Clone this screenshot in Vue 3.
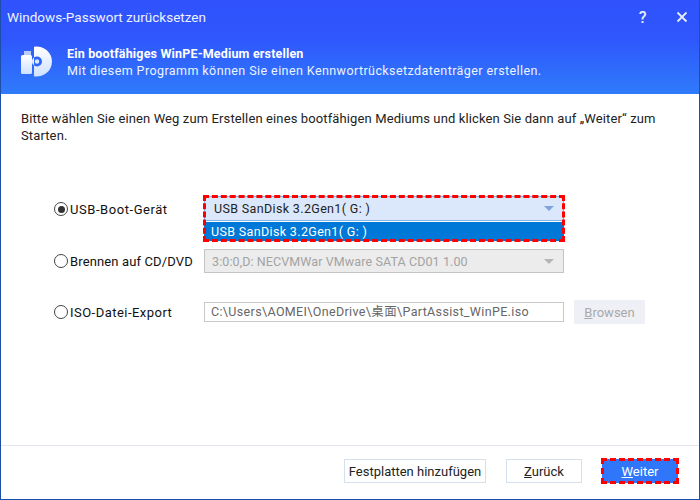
<script setup>
const rows = [
  { label: 'USB-Boot-Gerät', checked: true, spacing: '0.56px' },
  { label: 'Brennen auf CD/DVD', checked: false, spacing: '0.13px' },
  { label: 'ISO-Datei-Export', checked: false, spacing: '0.47px' }
]
</script>

<template>
  <div class="win">
    <header class="head">
      <div class="titlebar">
        <span class="title">Windows-Passwort zurücksetzen</span>
        <div class="ctrls">
          <span class="ctrl">?</span>
          <svg class="close" width="12" height="12" viewBox="0 0 12 12"><path d="M1.5 1.5L10.5 10.5M10.5 1.5L1.5 10.5" stroke="#e6edff" stroke-width="1.8" fill="none"/></svg>
        </div>
      </div>
      <div class="banner">
        <svg class="logo" width="34" height="32" viewBox="0 0 34 32">
          <defs>
            <linearGradient id="lg" x1="0" y1="0" x2="0" y2="1"><stop offset="0" stop-color="#ffffff"/><stop offset="1" stop-color="#cfe0ff"/></linearGradient>
          </defs>
          <path d="M14 .8A15 15 0 1 1 14 30.2Z M12 15.5a5 5 0 1 0 10 0a5 5 0 1 0-10 0Z" fill="url(#lg)" fill-rule="evenodd"/>
          <circle cx="17" cy="15.5" r="2.2" fill="#dce8ff"/>
          <path d="M4 5h7v4H4z" fill="#b9cdfb"/>
          <rect x="1" y="9" width="11" height="19" rx="1.5" fill="url(#lg)"/>
        </svg>
        <div class="banner-text">
          <div class="b1">Ein bootfähiges WinPE-Medium erstellen</div>
          <div class="b2">Mit diesem Programm können Sie einen Kennwortrücksetzdatenträger erstellen.</div>
        </div>
      </div>
    </header>

    <main class="body">
      <p class="intro">Bitte wählen Sie einen Weg zum Erstellen eines bootfähigen Mediums und klicken Sie dann auf „Weiter“ zum Starten.</p>

      <div class="form">
        <div class="row row-usb">
          <label class="opt" :style="{ letterSpacing: rows[0].spacing }">
            <span class="radio on"><i></i></span>{{ rows[0].label }}
          </label>
          <div class="dropwrap">
            <div class="combo active">
              <span>USB SanDisk 3.2Gen1( G: )</span>
              <span class="arrow blue"></span>
            </div>
            <div class="item">USB SanDisk 3.2Gen1( G: )</div>
            <div class="dash"></div>
          </div>
        </div>

        <div class="row row-cd">
          <label class="opt" :style="{ letterSpacing: rows[1].spacing }">
            <span class="radio"></span>{{ rows[1].label }}
          </label>
          <div class="combo disabled">
            <span>3:0:0,D: NECVMWar VMware SATA CD01 1.00</span>
            <span class="arrow"></span>
          </div>
        </div>

        <div class="row row-iso">
          <label class="opt" :style="{ letterSpacing: rows[2].spacing }">
            <span class="radio"></span>{{ rows[2].label }}
          </label>
          <div class="input">C:\Users\AOMEI\OneDrive\桌面\PartAssist_WinPE.iso</div>
          <button class="browse"><u>B</u>rowsen</button>
        </div>
      </div>
    </main>

    <footer class="foot">
      <button class="btn wide">Festplatten hinzufügen</button>
      <button class="btn back"><u>Z</u>urück</button>
      <button class="btn next"><u>W</u>eiter<span class="dash"></span></button>
    </footer>
  </div>
</template>

<style>
html, body { margin: 0; padding: 0; background: #fff; }
</style>

<style scoped>
.win {
  width: 700px;
  height: 500px;
  box-sizing: border-box;
  border: 1px solid #1d4fa8;
  border-top: 0;
  background: #fff;
  display: flex;
  flex-direction: column;
  font-family: "Roboto", "Noto Sans CJK SC", sans-serif;
  font-size: 13px;
  letter-spacing: 0.35px;
  color: #222;
}
.head {
  height: 94px;
  background: linear-gradient(180deg, #2f52fd 0%, #2f56fc 40%, #2f7bfb 100%);
  color: #fff;
  flex: none;
}
.titlebar {
  height: 34px;
  display: flex;
  align-items: center;
  justify-content: space-between;
  padding: 0 0 0 6px;
}
.title { font-size: 13.5px; letter-spacing: 0; color: #eef2ff; }
.ctrls { display: flex; align-items: center; gap: 29px; padding-right: 10px; }
.ctrl { font-size: 16px; font-weight: 500; color: #e6edff; }
.close { display: block; margin-right: 1px; }
.banner {
  display: flex;
  align-items: center;
  gap: 13px;
  padding: 8px 0 0 19px;
  height: 40px;
}
.logo { flex: none; }
.banner-text { line-height: 17px; }
.b1 { font-weight: 700; font-size: 12.5px; letter-spacing: 0.17px; }
.b2 { font-size: 12.5px; letter-spacing: 0.42px; color: #eef3ff; }
.body { flex: 1; padding: 0 20px; }
.intro {
  margin: 16px 0 0;
  line-height: 17px;
  width: 650px;
  letter-spacing: 0.12px;
  color: #222;
}
.form { margin-top: 52px; }
.row { display: flex; align-items: center; padding-left: 33px; }
.row-usb { align-items: flex-start; height: 45px; }
.row-cd { margin-top: 8px; height: 24px; }
.row-iso { margin-top: 27px; height: 24px; }
.opt { display: flex; align-items: center; width: 150px; flex: none; height: 24px; color: #111; }
.row-usb .opt { margin-top: 1px; }
.radio {
  width: 12px;
  height: 12px;
  border: 1px solid #444;
  border-radius: 50%;
  background: #fff;
  margin-right: 2px;
  display: flex;
  align-items: center;
  justify-content: center;
  flex: none;
}
.radio i { width: 7px; height: 7px; border-radius: 50%; background: #333; }
.dropwrap { position: relative; width: 360px; height: 45px; border: 0; }
.combo {
  box-sizing: border-box;
  width: 360px;
  height: 24px;
  display: flex;
  align-items: center;
  justify-content: space-between;
  padding: 0 9px 0 7px;
  font-size: 12.5px;
}
.combo.active {
  height: 25px;
  background: #dbe8fb;
  border: 1px solid #7eb4ea;
  padding-left: 9px;
  color: #222;
}
.combo.disabled {
  background: #ececec;
  border: 1px solid #c4c4c4;
  color: #a3a3a3;
  letter-spacing: 0.1px;
}
.arrow {
  width: 0;
  height: 0;
  border-left: 5.5px solid transparent;
  border-right: 5.5px solid transparent;
  border-top: 5px solid #b5b5b5;
}
.arrow.blue { border-top-color: #7fa3de; }
.item {
  height: 19px;
  line-height: 19px;
  margin-top: 1px;
  background: #0078d7;
  color: #fff;
  padding-left: 7px;
  font-size: 12.5px;
}
.dash {
  position: absolute;
  inset: -1px;
  border: 3px dashed #f00;
  pointer-events: none;
}
.input {
  box-sizing: border-box;
  width: 360px;
  height: 20px;
  line-height: 18px;
  border: 1px solid #c9c9c9;
  padding-left: 6px;
  color: #666;
  font-size: 12.5px;
  white-space: nowrap;
}
.browse {
  margin-left: 10px;
  width: 71px;
  height: 24px;
  border: 0;
  background: #eef0f5;
  color: #a9a9a9;
  font: inherit;
  padding: 0;
}
.foot {
  height: 54px;
  flex: none;
  border-top: 1px solid #e1e6ef;
  display: flex;
  align-items: flex-start;
  padding: 13px 21px 0 0;
  box-sizing: border-box;
  justify-content: flex-end;
}
.btn {
  position: relative;
  height: 24px;
  box-sizing: border-box;
  background: #fff;
  border: 1px solid #d6dfec;
  font: inherit;
  color: #222;
  padding: 0;
}
.wide { width: 142px; }
.back { width: 76px; margin-left: 20px; }
.next {
  width: 76px;
  margin-left: 20px;
  background: #2f76fb;
  border: 0;
  color: #fff;
}
</style>
